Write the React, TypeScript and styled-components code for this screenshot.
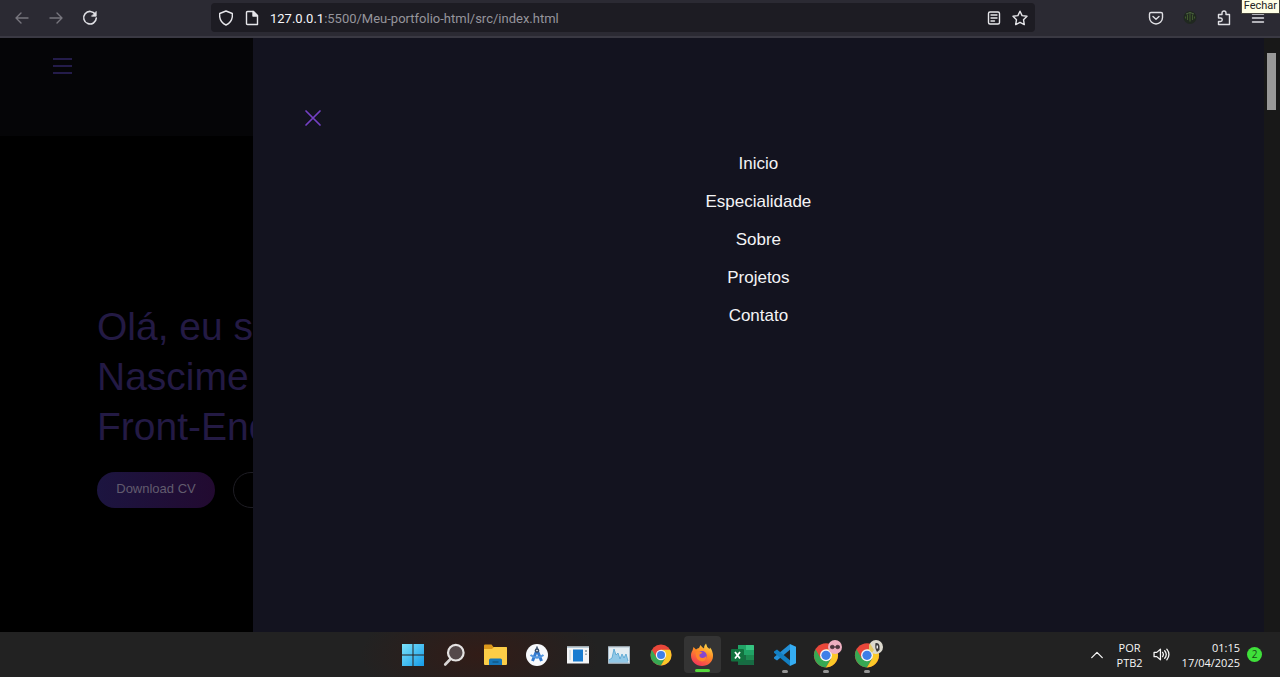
import React from "react";
import styled, { createGlobalStyle } from "styled-components";

const Global = createGlobalStyle`
  *, *::before, *::after { box-sizing: border-box; }
  body { margin: 0; background: #000; font-family: "Liberation Sans", Arial, sans-serif; }
  button { font: inherit; color: inherit; border: 0; padding: 0; background: none; cursor: pointer; }
  a { color: inherit; text-decoration: none; }
  ul { list-style: none; margin: 0; padding: 0; }
  svg { display: block; }
`;

const Screen = styled.div`
  display: flex;
  flex-direction: column;
  min-height: 100vh;
`;

/* Browser toolbar */

const Toolbar = styled.header`
  position: relative;
  display: flex;
  align-items: flex-start;
  height: 38px;
  padding: 0 5px;
  background: #2b2a33;
  border-bottom: 2px solid #3a3943;
  color: #e6e6ea;
`;

const ToolGroup = styled.div`
  display: flex;
`;

const ToolButton = styled.button<{ $dim?: boolean }>`
  display: grid;
  place-items: center;
  width: 34px;
  height: 36px;
  color: ${(p) => (p.$dim ? "#77767e" : "#e0e0e5")};
`;

const AddressBar = styled.div`
  flex: 1;
  display: flex;
  align-items: center;
  gap: 10px;
  height: 29px;
  margin: 3px 104px 0;
  padding: 0 7px;
  border-radius: 4px;
  background: #1d1c23;
`;

const FieldButton = styled.button`
  display: grid;
  place-items: center;
  width: 16px;
  height: 16px;
`;

const Url = styled.a`
  flex: 1;
  font: 13px/18px Roboto, "Noto Sans", sans-serif;
  color: #96959c;
  padding-top: 2px;
  b { font-weight: 400; color: #f6f6fa; }
`;

const Tooltip = styled.span`
  position: absolute;
  top: 0;
  right: 0;
  height: 14px;
  padding: 0 2px;
  border: 1px solid #45443c;
  border-top: 0;
  background: #ffffe6;
  color: #222;
  font: 11px/12px Roboto, "Noto Sans", sans-serif;
`;

/* Page */

const Viewport = styled.main`
  flex: 1;
  display: grid;
  grid-template-columns: minmax(0, 1fr) minmax(0, 4fr) 16px;
`;

const Backdrop = styled.div`
  overflow: hidden;
  background: #000;
`;

const SiteHeader = styled.div`
  height: 98px;
  padding: 18px 52px;
  background: #050507;
`;

const MenuButton = styled.button`
  color: #241c4a;
`;

const Hero = styled.section`
  padding: 166px 0 0 97px;
  white-space: nowrap;
`;

const Title = styled.h1`
  margin: 0 0 20px;
  font-size: 39px;
  line-height: 50px;
  font-weight: 400;
  color: #231a44;
`;

const Actions = styled.div`
  display: flex;
  gap: 18px;
`;

const Pill = styled.button<{ $outline?: boolean }>`
  flex: none;
  width: 118px;
  height: 36px;
  padding-bottom: 3px;
  border-radius: 18px;
  border: ${(p) => (p.$outline ? "1px solid #1e1d24" : "0")};
  background: ${(p) => (p.$outline ? "#000" : "linear-gradient(90deg, #1c1540, #220a30)")};
  color: #625c6e;
  font-size: 13px;
`;

const Drawer = styled.nav`
  background: #13131f;
  padding: 71px 0 0;
`;

const CloseButton = styled.button`
  display: block;
  margin-left: 51px;
  color: #7440c4;
`;

const Links = styled.ul`
  display: flex;
  flex-direction: column;
  align-items: center;
  gap: 18px;
  margin-top: 27px;
  font-size: 17px;
  line-height: 20px;
  color: #f4f4f6;
`;

const ScrollTrack = styled.div`
  padding: 15px 4px 0 3px;
  background: #181818;
`;

const ScrollThumb = styled.div`
  height: 57px;
  background: #989898;
`;

/* Taskbar */

const Taskbar = styled.footer`
  display: grid;
  grid-template-columns: minmax(0, 1fr) 492px minmax(0, 1fr);
  align-items: center;
  height: 45px;
  background:
    radial-gradient(ellipse 120px 50px at 480px 50%, #321c17, transparent),
    #222222;
  color: #f6f6f6;
`;

const Apps = styled.div`
  grid-column: 2;
  display: flex;
  justify-content: space-between;
`;

const AppButton = styled.button<{ $active?: boolean; $running?: boolean }>`
  position: relative;
  display: grid;
  place-items: center;
  width: 37px;
  height: 37px;
  border-radius: 4px;
  background: ${(p) => (p.$active ? "#343434" : "none")};
  &::after {
    content: "";
    display: ${(p) => (p.$active || p.$running ? "block" : "none")};
    position: absolute;
    bottom: ${(p) => (p.$active ? "1px" : "0")};
    width: ${(p) => (p.$active ? "15px" : "6px")};
    height: 3px;
    border-radius: 2px;
    background: ${(p) => (p.$active ? "#55d83c" : "#969696")};
  }
`;

const Tray = styled.div`
  display: flex;
  align-items: center;
  justify-content: flex-end;
  padding-right: 18px;
  font: 11px/15px "Open Sans", "Noto Sans", sans-serif;
`;

const TrayButton = styled.button<{ $gap: number }>`
  margin-right: ${(p) => p.$gap}px;
`;

const Language = styled(TrayButton)`
  text-align: center;
`;

const Clock = styled.time`
  margin-right: 7px;
  text-align: right;
`;

const Count = styled.span`
  width: 15px;
  height: 15px;
  border-radius: 50%;
  background: #3fe03a;
  color: #174a16;
  font-size: 10px;
  text-align: center;
`;

type IconProps = { children: React.ReactNode; size?: number; width?: number };

const Line = ({ children, size = 16, width = 1.4 }: IconProps) => (
  <svg width={size} height={size} viewBox="0 0 16 16" fill="none" stroke="currentColor"
    strokeWidth={width} strokeLinecap="round" strokeLinejoin="round" aria-hidden="true">
    {children}
  </svg>
);

const Art = ({ children, size = 24 }: IconProps) => (
  <svg width={size} height={size} viewBox="0 0 24 24" aria-hidden="true">{children}</svg>
);

const ChromeShape = () => (
  <>
    <circle cx="12" cy="12" r="10.5" fill="#e9473a" />
    <path d="M2.9 6.8A10.5 10.5 0 0 0 12 22.5l4.6-7.9L12 12 7.4 14.6Z" fill="#37a853" />
    <path d="M12 22.5A10.5 10.5 0 0 0 21.1 6.8H12l4.6 7.9Z" fill="#fbc928" />
    <circle cx="12" cy="12" r="5.2" fill="#f5f5f5" />
    <circle cx="12" cy="12" r="4" fill="#3e7fe8" />
  </>
);

const apps: { name: string; active?: boolean; running?: boolean; art: React.ReactNode }[] = [
  {
    name: "Iniciar",
    art: (
      <Art>
        <defs>
          <linearGradient id="win" x2="1" y2="1">
            <stop stopColor="#7be3fb" /><stop offset="1" stopColor="#159be8" />
          </linearGradient>
        </defs>
        <path d="M1 1h10.5v10.5H1zM12.5 1H23v10.5H12.5zM1 12.5h10.5V23H1zM12.5 12.5H23V23H12.5z" fill="url(#win)" />
      </Art>
    ),
  },
  {
    name: "Pesquisar",
    art: (
      <Art>
        <path d="m8.5 16-5.3 5.5" stroke="#d8d6d5" strokeWidth="2.6" strokeLinecap="round" />
        <circle cx="13.8" cy="9.7" r="7.8" fill="#54494a" stroke="#e5e3e2" strokeWidth="2.2" />
      </Art>
    ),
  },
  {
    name: "Explorador de Arquivos",
    art: (
      <Art>
        <path d="M1 2.5Q1 1.5 2 1.5h6.500l2 2.500H23q1 0 1 1V9H1z" fill="#dc981c" />
        <path d="M1 6h8l2-2h12q1 0 1 1v16q0 1-1 1H2q-1 0-1-1z" fill="#fccd47" />
        <path d="M6 22v-5q0-1.500 1.500-1.500h10Q19 15.500 19 17v5z" fill="#1676b8" />
        <path d="M9.500 19h6" stroke="#125987" strokeWidth="1.500" />
      </Art>
    ),
  },
  {
    name: "Android Studio",
    art: (
      <Art>
        <circle cx="12" cy="12" r="11" fill="#f7f9fc" />
        <path d="M12 7 7.500 18M12 7l4.500 11" stroke="#327ad0" strokeWidth="3" />
        <path d="M5.500 12q6.500 5 13 0" fill="none" stroke="#5196df" strokeWidth="2.200" />
        <circle cx="12" cy="7.500" r="2.300" fill="#354a67" />
        <path d="M12 3.500V6" stroke="#354a67" strokeWidth="1.500" />
        <circle cx="12" cy="7.600" r=".8" fill="#fff" />
      </Art>
    ),
  },
  {
    name: "Visualizador",
    art: (
      <Art>
        <path d="M1 3.500h22v17H1z" fill="#f4f5f6" />
        <path d="M1 3.500h22V5H1z" fill="#b8cbd5" />
        <path d="M7 6.500h10v12H7z" fill="#177bd0" />
        <path d="M3 7h2v10H3z" fill="#d8e1e6" />
        <path d="M19 7h2v2h-2zM19 10.500h2v1.500h-2z" fill="#9cabb3" />
      </Art>
    ),
  },
  {
    name: "Monitor de Recursos",
    art: (
      <Art>
        <path d="M1 3.500h22v17H1z" fill="#e4edf2" />
        <path d="M2 17l3-2 2-9 2 6 2-2 2 6 2-5 2 4 2-4 2 7v2H2z" fill="#91c8e7" />
        <path d="M2 17l3-2 2-9 2 6 2-2 2 6 2-5 2 4 2-4 2 7" fill="none" stroke="#5aa7d3" strokeWidth=".9" />
        <path d="M1.500 4h21v16h-21z" fill="none" stroke="#aabdca" />
      </Art>
    ),
  },
  { name: "Google Chrome", art: <Art><ChromeShape /></Art> },
  {
    name: "Firefox",
    active: true,
    art: (
      <Art>
        <defs>
          <linearGradient id="fox" x1=".8" y1="0" x2=".3" y2="1">
            <stop stopColor="#ffe34b" /><stop offset=".45" stopColor="#ff8b25" /><stop offset="1" stopColor="#f3325b" />
          </linearGradient>
        </defs>
        <path d="M2.500 7.500 3.500 4l2.500 2.500Q7.500 5 9 5l1.500-3q1.500 2.500 3.500 3.500 0-3 2-5 .5 3.500 3.500 5.500l.5-1.500Q23 8 23 13c0 6-5 10-11 10S1 18.500 1 12.500c0-2 .6-3.700 1.500-5Z" fill="url(#fox)" />
        <circle cx="12" cy="12.800" r="4.800" fill="#8446cf" />
        <path d="M5.500 9.500Q9 7.500 12.500 9.700l-3 1.800q-.5 3 2.500 3.500 2.500.3 4.300-2Q16.500 18 12 18.500q-6.500-1-6.500-9Z" fill="#ff852b" />
      </Art>
    ),
  },
  {
    name: "Excel",
    art: (
      <Art>
        <path d="M7 2h15q1 0 1 1v18q0 1-1 1H7z" fill="#21a366" />
        <path d="M15 2h7q1 0 1 1v4h-8z" fill="#36c481" />
        <path d="M7 12h16v9q0 1-1 1H7z" fill="#176b43" />
        <path d="M15 12h8v5h-8z" fill="#1d8a51" />
        <rect x="0" y="6" width="13" height="12.500" rx="1" fill="#12723f" />
        <path d="m4 9 5 6.500M9 9l-5 6.500" stroke="#fff" strokeWidth="1.800" />
      </Art>
    ),
  },
  {
    name: "Visual Studio Code",
    running: true,
    art: (
      <Art>
        <path d="M17 1v5.800L4 17.500 1 15.500v-1.200z" fill="#238fd5" />
        <path d="M17 23v-5.800L4 6.500 1 8.500v1.200z" fill="#137fc2" />
        <path d="m17 1 6 2.700v16.600L17 23z" fill="#35adf3" />
      </Art>
    ),
  },
  {
    name: "Google Chrome, perfil 1",
    running: true,
    art: (
      <svg width="34" height="30" viewBox="0 0 34 30" aria-hidden="true">
        <g transform="translate(3.200 1.500) scale(1.150)"><ChromeShape /></g>
        <circle cx="26" cy="7" r="7" fill="#efafc1" />
        <circle cx="23.300" cy="7" r="2.200" fill="#65434f" />
        <circle cx="28.700" cy="7" r="2.200" fill="#65434f" />
        <path d="M21 7h10" stroke="#372a30" />
      </svg>
    ),
  },
  {
    name: "Google Chrome, perfil 2",
    running: true,
    art: (
      <svg width="34" height="30" viewBox="0 0 34 30" aria-hidden="true">
        <g transform="translate(3.200 1.500) scale(1.150)"><ChromeShape /></g>
        <circle cx="26" cy="7" r="7" fill="#dcd9cd" />
        <path d="M20 3.500a7 7 0 0 0 2 9.200l2-2.700z" fill="#e3ca65" />
        <path d="M25.500 3q3.500-.5 4 3v4L27 12q-2.500-4-1.500-9z" fill="#383737" />
        <path d="M26.500 5.500h1.500v3h-1.500z" fill="#eee" />
      </svg>
    ),
  },
];

const links = ["Inicio", "Especialidade", "Sobre", "Projetos", "Contato"];

export default function App() {
  return (
    <Screen>
      <Global />
      <Toolbar>
        <ToolGroup>
          <ToolButton $dim aria-label="Voltar"><Line><path d="M14 8H2M7 3 2 8l5 5" /></Line></ToolButton>
          <ToolButton $dim aria-label="Avançar"><Line><path d="M2 8h12M9 3l5 5-5 5" /></Line></ToolButton>
          <ToolButton aria-label="Recarregar">
            <Line width={1.6}><path d="M13.300 4.300A6.300 6.300 0 1 0 14.300 8" /><path d="M14.200 1.800v4.400H9.800z" fill="currentColor" strokeWidth=".8" /></Line>
          </ToolButton>
        </ToolGroup>
        <AddressBar>
          <FieldButton aria-label="Proteção"><Line><path d="M8 1 14.300 3.500v3.300Q13.500 12.500 8 15 2.500 12.500 1.700 6.800V3.500z" /></Line></FieldButton>
          <FieldButton aria-label="Informações do site"><Line><path d="M3.500 1.500h6l4 4v9h-10q-1 0-1-1v-11q0-1 1-1Z" /><path d="M9 1.500V6h4.500z" fill="currentColor" /></Line></FieldButton>
          <Url href="#inicio"><b>127.0.0.1</b>:5500/Meu-portfolio-html/src/index.html</Url>
          <FieldButton aria-label="Modo de leitura"><Line><rect x="2.500" y="2" width="11" height="12" rx="1.500" /><path d="M5 5h6M5 8h6M5 11h3.500" /></Line></FieldButton>
          <FieldButton aria-label="Adicionar aos favoritos"><Line><path d="m8 1.200 2.100 4.400 4.900.7-3.500 3.400.8 4.900L8 12.300l-4.300 2.300.8-4.900L1 6.300l4.900-.7z" /></Line></FieldButton>
        </AddressBar>
        <ToolGroup>
          <ToolButton aria-label="Pocket"><Line><path d="M3 2.500h10q1.500 0 1.500 1.500v3.500a6.500 6.500 0 0 1-13 0V4q0-1.500 1.500-1.500Z" /><path d="m5 6.500 3 2.700 3-2.700" /></Line></ToolButton>
          <ToolButton aria-label="Extensão">
            <svg width="16" height="16" viewBox="0 0 16 16" aria-hidden="true">
              <circle cx="8" cy="7.500" r="6.500" fill="#202820" />
              <path d="M8 2.500v9M5.500 4.500v5.500M10.500 4.500v5.500M3.500 6.500v2M12.500 6.500v2" stroke="#41592f" strokeWidth="1.100" />
              <path d="M4 4q4-3 8 0" stroke="#4c6340" fill="none" />
            </svg>
          </ToolButton>
          <ToolButton aria-label="Extensões"><Line><path d="M6 4.500V3a2 2 0 0 1 4 0v1.500h3.500v10h-11V11.500H4.500a1.700 1.700 0 0 0 0-3.500H2.500V4.500z" /></Line></ToolButton>
          <ToolButton aria-label="Menu do navegador"><Line><path d="M2.500 4h11M2.500 8h11M2.500 12h11" /></Line></ToolButton>
        </ToolGroup>
        <Tooltip role="tooltip">Fechar</Tooltip>
      </Toolbar>

      <Viewport>
        <Backdrop>
          <SiteHeader>
            <MenuButton aria-label="Abrir menu">
              <svg width="20" height="20" viewBox="0 0 20 20" stroke="currentColor" strokeWidth="2" aria-hidden="true"><path d="M1 3h19M1 10h19M1 17h19" /></svg>
            </MenuButton>
          </SiteHeader>
          <Hero id="inicio">
            <Title>Olá, eu s<br />Nascime<br />Front-End</Title>
            <Actions>
              <Pill>Download CV</Pill>
              <Pill $outline aria-label="Contato" />
            </Actions>
          </Hero>
        </Backdrop>
        <Drawer aria-label="Principal">
          <CloseButton aria-label="Fechar menu">
            <svg width="18" height="18" viewBox="0 0 18 18" stroke="currentColor" strokeWidth="1.700" strokeLinecap="round" aria-hidden="true"><path d="m2 2 14 14M16 2 2 16" /></svg>
          </CloseButton>
          <Links>
            {links.map((label) => (
              <li key={label}><a href={`#${label.toLowerCase()}`}>{label}</a></li>
            ))}
          </Links>
        </Drawer>
        <ScrollTrack><ScrollThumb /></ScrollTrack>
      </Viewport>

      <Taskbar>
        <Apps>
          {apps.map((app) => (
            <AppButton key={app.name} $active={app.active} $running={app.running} aria-label={app.name}>{app.art}</AppButton>
          ))}
        </Apps>
        <Tray>
          <TrayButton $gap={13} aria-label="Ícones ocultos"><Line size={14} width={1.5}><path d="m2 11 6-6 6 6" /></Line></TrayButton>
          <Language $gap={10}>POR<br />PTB2</Language>
          <TrayButton $gap={12} aria-label="Volume"><Line size={17} width={1.2}><path d="M1 6h2.500L7 3v10l-3.500-3H1zM9 6q1.500 2 0 4M11 4.500q3 3.500 0 7M13 3q4 5 0 10" /></Line></TrayButton>
          <Clock>01:15<br />17/04/2025</Clock>
          <Count>2</Count>
        </Tray>
      </Taskbar>
    </Screen>
  );
}
